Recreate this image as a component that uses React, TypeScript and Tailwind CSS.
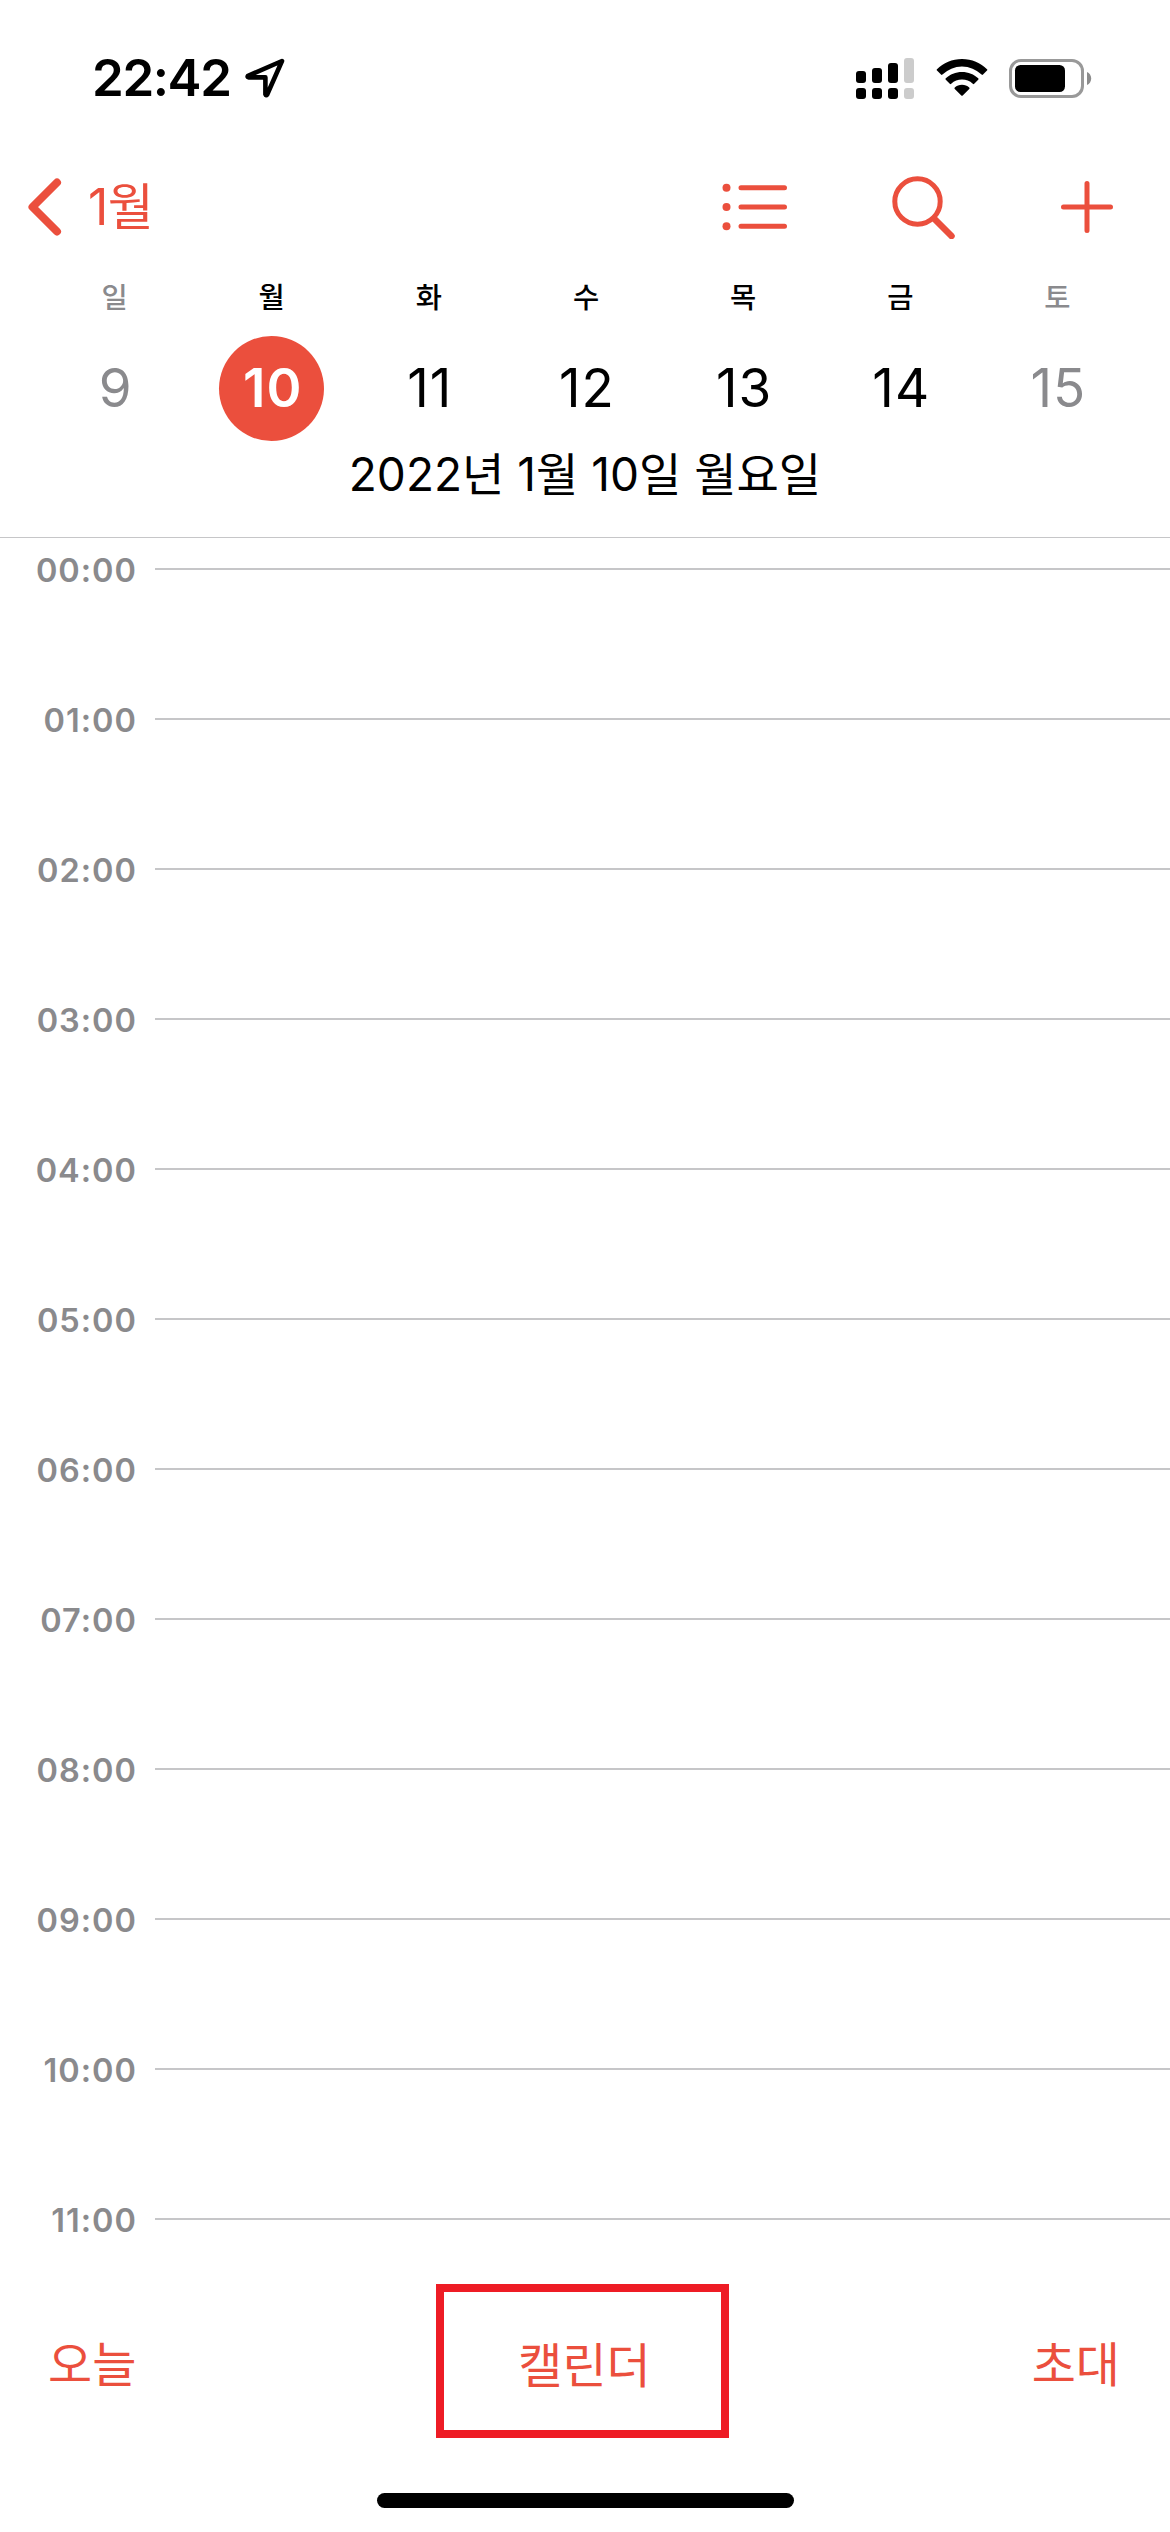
import React from 'react';

interface Day {
  label: string;
  date: number;
  weekend?: boolean;
  selected?: boolean;
}

const DAYS: Day[] = [
  { label: '일', date: 9, weekend: true },
  { label: '월', date: 10, selected: true },
  { label: '화', date: 11 },
  { label: '수', date: 12 },
  { label: '목', date: 13 },
  { label: '금', date: 14 },
  { label: '토', date: 15, weekend: true },
];

const HOURS = Array.from({ length: 12 }, (_, i) => `${String(i).padStart(2, '0')}:00`);

const SIGNAL_BARS = [
  { x: 0, y: 13 },
  { x: 16, y: 10 },
  { x: 32, y: 5 },
  { x: 48, y: 0, dim: true },
];

const SignalIcon = () => (
  <svg width="58" height="41" viewBox="0 0 58 41">
    {SIGNAL_BARS.map(({ x, y, dim }) => (
      <g key={x} fill={dim ? '#cccccc' : '#000'}>
        <rect x={x} y={y} width="10" height={25 - y} rx="3" />
        <rect x={x} y="30" width="10" height="11" rx="3" />
      </g>
    ))}
  </svg>
);

const WifiIcon = () => (
  <svg width="52" height="38" viewBox="0 0 52 38">
    <path d="M26 0C35.8 0 44.7 3.8 51 10.2a1 1 0 0 1 0 1.4L47 15.6a1 1 0 0 1-1.4 0A28 28 0 0 0 6.4 15.6a1 1 0 0 1-1.4 0L1 11.6a1 1 0 0 1 0-1.4C7.3 3.8 16.2 0 26 0Z" />
    <path d="M26 13c6.3 0 12 2.4 16.2 6.3a1 1 0 0 1 0 1.5L38.2 24.8a1 1 0 0 1-1.4 0A16 16 0 0 0 15.2 24.8a1 1 0 0 1-1.4 0L9.8 20.8a1 1 0 0 1 0-1.5C14 15.4 19.7 13 26 13Z" />
    <path d="M26 25.7c2.8 0 5.3 1 7.2 2.7a1 1 0 0 1 0 1.5L26.7 36.5a1 1 0 0 1-1.4 0L18.8 29.9a1 1 0 0 1 0-1.5c1.9-1.7 4.4-2.7 7.2-2.7Z" />
  </svg>
);

const BatteryIcon = () => (
  <svg width="83" height="39" viewBox="0 0 83 39">
    <rect x="1.5" y="1.5" width="72" height="36" rx="10.5" fill="none" stroke="#999999" strokeWidth="3" />
    <rect x="6" y="6" width="50" height="27" rx="5.5" />
    <path d="M78 13c2.6 1 4.2 3.6 4.2 6.5s-1.6 5.5-4.2 6.5Z" fill="#8c8c8c" />
  </svg>
);

const StatusBar = () => (
  <div className="flex h-[156px] items-center pl-[92px] pr-[78px]">
    <span className="w-[153px] pb-[2px] text-[51px] font-semibold leading-none tracking-[-1.4px]">22:42</span>
    <svg width="40" height="40" viewBox="0 0 40 40" fill="none" stroke="#000" strokeWidth="4.6" strokeLinejoin="round">
      <path d="M37 3 3 17.8Q2 19 3.5 19.4H20.4V36.2Q21 38 22.2 36.5Z" />
    </svg>
    <div className="ml-auto flex items-center">
      <SignalIcon />
      <div className="ml-[22px]">
        <WifiIcon />
      </div>
      <div className="ml-[21px]">
        <BatteryIcon />
      </div>
    </div>
  </div>
);

const NavBar = () => (
  <div className="flex h-[102px] items-center pl-[28px] pr-[56px] text-[#eb4f3d]">
    <svg width="34" height="58" viewBox="0 0 34 58" fill="none" stroke="currentColor" strokeWidth="8" strokeLinecap="round" strokeLinejoin="round">
      <path d="M29 4.5 4.5 29 29 53.5" />
    </svg>
    <span className="ml-[26px] text-[50px] leading-none tracking-[-0.5px]">1월</span>
    <div className="ml-auto flex items-center">
      <svg width="66" height="48" viewBox="0 0 66 48" stroke="currentColor" strokeWidth="5" strokeLinecap="round">
        <path d="M19 4.7H62.5M19 24H62.5M19 43.3H62.5" />
        <g fill="currentColor" stroke="none">
          <circle cx="4.5" cy="4.7" r="4" />
          <circle cx="4.5" cy="24" r="4" />
          <circle cx="4.5" cy="43.3" r="4" />
        </g>
      </svg>
      <svg className="ml-[104px]" width="64" height="64" viewBox="0 0 64 64" fill="none" stroke="currentColor" strokeLinecap="round">
        <circle cx="25.5" cy="26.5" r="22.7" strokeWidth="5" />
        <path d="M43 44.5 59.5 61" strokeWidth="6.5" />
      </svg>
      <svg className="ml-[104px]" width="54" height="54" viewBox="0 0 54 54" stroke="currentColor" strokeWidth="5" strokeLinecap="round">
        <path d="M27 3.5V50.5M3.5 27H50.5" />
      </svg>
    </div>
  </div>
);

const WeekStrip = () => (
  <div className="grid grid-cols-7 pl-[36px] pr-[34px]">
    {DAYS.map(({ label, date, weekend, selected }) => (
      <div key={date} className={`flex flex-col items-center ${weekend ? 'text-[#8a8a8d]' : 'text-black'}`}>
        <span className="h-[78px] pt-[25px] text-[28.5px] font-medium leading-[30px]">{label}</span>
        <div
          className={`flex h-[105px] w-[105px] items-center justify-center rounded-full pb-[1px] pl-[2px] text-[53px] leading-none tracking-[1px] ${
            selected ? 'bg-[#eb4f3d] font-semibold text-white' : ''
          }`}
        >
          {date}
        </div>
      </div>
    ))}
  </div>
);

const HourRow = ({ hour }: { hour: string }) => (
  <div className="flex h-[150px] items-start">
    <span className="w-[137px] text-right text-[32.5px] font-semibold leading-[40px] tracking-[1px] text-[#8a8a8d]">{hour}</span>
    <div className="ml-[18px] mt-[17px] h-[2px] flex-1 bg-[#c6c6c8]" />
  </div>
);

const Toolbar = () => (
  <div className="flex h-[154px] items-center text-[48px] leading-none text-[#eb4f3d]">
    <button className="w-[436px] pl-[48px] pt-[8px] text-left">오늘</button>
    <button className="h-[154px] w-[293px] border-8 border-[#ee1c25] pl-[4px] pt-[9px]">캘린더</button>
    <button className="w-[441px] pr-[50px] pt-[8px] text-right">초대</button>
  </div>
);

const App: React.FC = () => {
  return (
    <div className="flex h-[2532px] w-[1170px] flex-col overflow-hidden bg-white font-['Inter','Noto_Sans_CJK_KR',sans-serif] text-black">
      <StatusBar />
      <NavBar />
      <WeekStrip />
      <div className="flex h-[97px] justify-center border-b border-[#c6c6c8] pt-[7px] text-[46px] leading-[52px]">
        2022년 1월 10일 월요일
      </div>

      <div className="h-[1746px] overflow-hidden pt-[13px]">
        {HOURS.map((hour) => (
          <HourRow key={hour} hour={hour} />
        ))}
      </div>

      <Toolbar />
      <div className="mx-auto mt-[55px] h-[15px] w-[417px] rounded-full bg-black" />
    </div>
  );
};

export default App;
